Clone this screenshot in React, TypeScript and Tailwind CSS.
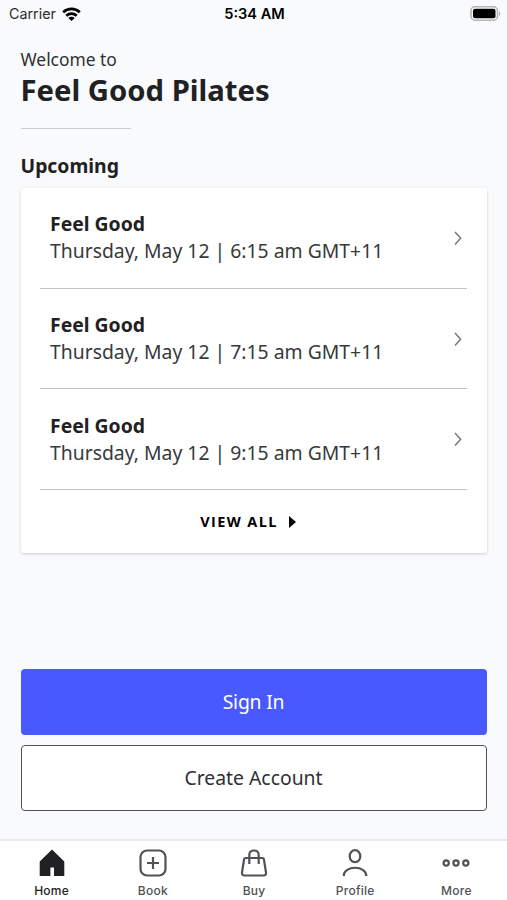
import type { ReactNode } from "react";

const CLASSES = [
  { name: "Feel Good", time: "Thursday, May 12 | 6:15 am GMT+11" },
  { name: "Feel Good", time: "Thursday, May 12 | 7:15 am GMT+11" },
  { name: "Feel Good", time: "Thursday, May 12 | 9:15 am GMT+11" },
];

const StatusBar = () => (
  <header className="grid h-7 grid-cols-3 items-center pr-[6px] pl-[9px] font-['Inter',sans-serif] text-black">
    <div className="flex items-center gap-[6px]">
      <span className="text-[14.3px] leading-7 text-[#2b2c2e]">Carrier</span>
      <svg width="19" height="15" viewBox="0 0 19 15" fill="none" stroke="currentColor" strokeWidth="2.7">
        <path d="M1.2 5.2C5.9 .7 13.1 .7 17.8 5.2" />
        <path d="M4.3 8.7C7.3 5.9 11.7 5.9 14.7 8.7" />
        <path d="M9.5 14L6.3 10.9C8.1 9.2 10.9 9.2 12.7 10.9Z" fill="currentColor" stroke="none" />
      </svg>
    </div>
    <span className="pr-px text-center text-[14.6px] leading-7 font-semibold">5:34 AM</span>
    <svg className="mb-px justify-self-end" width="31" height="15" viewBox="0 0 31 15">
      <rect x="1" y=".8" width="26.5" height="13.4" rx="4" fill="#fff" stroke="#b3b4b5" strokeWidth="1.6" />
      <rect x="3" y="2.8" width="22.5" height="9.4" rx="2" fill="#000" />
      <path d="M29 5.2C30.8 6 30.8 9 29 9.8Z" fill="#b3b4b5" />
    </svg>
  </header>
);

const ClassRow = ({ name, time }: { name: string; time: string }) => (
  <li className="flex h-[100.7px] items-center justify-between border-b border-[#c4c5c6] pr-[5px] pl-[10px]">
    <div className="pb-px text-[19.36px] leading-[27px]">
      <h3 className="font-bold text-[#1f2123]">{name}</h3>
      <p className="text-[#37393b]">{time}</p>
    </div>
    <svg width="9" height="14" viewBox="0 0 9 14" fill="none" stroke="#77797b" strokeWidth="1.5">
      <path d="M2 1L7.6 7.2L2 13.4" />
    </svg>
  </li>
);

const TabItem = ({ label, active, children }: { label: string; active?: boolean; children: ReactNode }) => (
  <button
    className={`flex flex-1 flex-col items-center pt-[7px] font-medium ${
      active ? "text-[#1f2123]" : "text-[#505255]"
    }`}
  >
    <svg width="30" height="30" viewBox="0 0 30 30" fill="none" stroke="currentColor" strokeWidth="2.2">
      {children}
    </svg>
    <span className="mt-[5px] text-[12px] leading-4 tracking-[0.25px]">{label}</span>
  </button>
);

export default function App() {
  return (
    <div className="flex h-[900px] w-[507px] flex-col overflow-hidden bg-[#f8fafc] font-['Noto_Sans',sans-serif]">
      <StatusBar />

      <main className="flex flex-1 flex-col px-[20.5px] pt-[19px]">
        <p className="text-[17.4px] leading-6 text-[#2f3133]">Welcome to</p>
        <h1 className="text-[29.25px] leading-[39px] font-bold text-[#1f2123]">Feel Good Pilates</h1>
        <div className="mt-[18px] w-[110px] border-t border-[#cbcdcf]" />
        <h2 className="mt-[23px] text-[19.36px] leading-7 font-bold text-[#1f2123]">Upcoming</h2>

        <section className="mt-[8px] h-[365px] rounded-[3px] bg-white px-[19.5px] shadow-[0_1px_3px_rgba(0,0,0,0.18)]">
          <ul>
            {CLASSES.map((item) => (
              <ClassRow key={item.time} name={item.name} time={item.time} />
            ))}
          </ul>
          <button className="flex h-[64px] w-full items-center justify-center gap-[11px] pr-[11px] font-['Open_Sans',sans-serif] text-[14.5px] font-bold tracking-[1.4px] text-black">
            VIEW ALL
            <svg width="7" height="12" viewBox="0 0 7 12" fill="currentColor">
              <path d="M0 0L7 6L0 12Z" />
            </svg>
          </button>
        </section>

        <div className="mt-auto mb-[28px] flex flex-col gap-[10px] text-[19.36px]">
          <button className="h-[66px] rounded-[4px] bg-[#485aff] tracking-[-0.2px] text-white">Sign In</button>
          <button className="h-[66px] rounded-[4px] border border-[#505255] bg-white text-[#2f3133]">
            Create Account
          </button>
        </div>
      </main>

      <nav className="flex h-[61px] border-t-2 border-[#e9ebed] bg-white pl-px font-['Inter',sans-serif]">
        <TabItem label="Home" active>
          <path d="M15 1.5L27.3 13.5V28H17V19.5H13.4V28H2.7V13.5Z" fill="currentColor" stroke="none" />
        </TabItem>
        <TabItem label="Book">
          <rect x="2.5" y="2.5" width="25" height="25" rx="6.5" />
          <path d="M15 9V21M9 15H21" />
        </TabItem>
        <TabItem label="Buy">
          <path d="M6.5 10H23.5Q24.7 10 24.9 11.2L27 24.5Q27.3 27.5 24.5 27.5H5.5Q2.7 27.5 3 24.5L5.1 11.2Q5.3 10 6.5 10Z" />
          <path d="M10.3 16V7Q10.3 2.5 15 2.5Q19.7 2.5 19.7 7V16" />
        </TabItem>
        <TabItem label="Profile">
          <ellipse cx="15" cy="8.2" rx="5.3" ry="6" />
          <path d="M3.7 28C3.7 17 26.3 17 26.3 28" />
        </TabItem>
        <TabItem label="More">
          <circle cx="5.2" cy="15" r="2.6" />
          <circle cx="15" cy="15" r="2.6" />
          <circle cx="24.8" cy="15" r="2.6" />
        </TabItem>
      </nav>
    </div>
  );
}
